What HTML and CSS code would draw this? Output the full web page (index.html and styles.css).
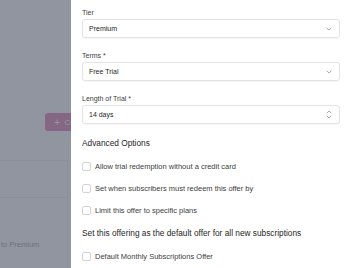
FILE: index.html
```html
<!DOCTYPE html>
<html lang="en">
<head>
<meta charset="utf-8">
<title>Offer</title>
<link rel="stylesheet" href="styles.css">
</head>
<body>
<div class="page">
  <div class="toolbar">
    <button class="create-btn"><span class="plus">+</span> Create</button>
  </div>
  <div class="table">
    <div class="row"></div>
    <div class="row row-tall"><span class="cell-text">to Premium</span></div>
  </div>
</div>
<div class="overlay"></div>
<aside class="panel">
  <div class="field">
    <label class="label">Tier</label>
    <div class="select"><span>Premium</span>
      <svg class="chev" viewBox="0 0 6 4" width="6" height="4"><path d="M0.6 0.7 L3 3.1 L5.4 0.7" fill="none" stroke="#a3a3a3" stroke-width="0.9"/></svg>
    </div>
  </div>
  <div class="field">
    <label class="label">Terms *</label>
    <div class="select"><span>Free Trial</span>
      <svg class="chev" viewBox="0 0 6 4" width="6" height="4"><path d="M0.6 0.7 L3 3.1 L5.4 0.7" fill="none" stroke="#a3a3a3" stroke-width="0.9"/></svg>
    </div>
  </div>
  <div class="field">
    <label class="label">Length of Trial *</label>
    <div class="select"><span>14 days</span>
      <svg class="chev" viewBox="0 0 6 9" width="6" height="9"><path d="M0.8 3.2 L3 1 L5.2 3.2 M0.8 5.8 L3 8 L5.2 5.8" fill="none" stroke="#a3a3a3" stroke-width="0.9"/></svg>
    </div>
  </div>
  <h3 class="heading">Advanced Options</h3>
  <div class="checks">
    <label class="check"><span class="box"></span>Allow trial redemption without a credit card</label>
    <label class="check"><span class="box"></span>Set when subscribers must redeem this offer by</label>
    <label class="check"><span class="box"></span>Limit this offer to specific plans</label>
  </div>
  <h3 class="heading heading-2">Set this offering as the default offer for all new subscriptions</h3>
  <div class="checks checks-2">
    <label class="check"><span class="box"></span>Default Monthly Subscriptions Offer</label>
  </div>
</aside>
</body>
</html>
```

FILE: styles.css
```css
* { box-sizing: border-box; }
html, body {
  margin: 0;
  padding: 0;
  width: 348px;
  height: 268px;
  overflow: hidden;
  background: #ffffff;
  font-family: "Liberation Sans", Arial, sans-serif;
}
.page {
  display: flex;
  flex-direction: column;
  padding-top: 113px;
  width: 348px;
  height: 268px;
  overflow: hidden;
}
.toolbar {
  display: flex;
  padding-left: 45px;
}
.create-btn {
  height: 18px;
  width: 60px;
  border: none;
  border-radius: 3px;
  background: #d64593;
  color: #ffffff;
  font-family: inherit;
  font-size: 8px;
  text-align: left;
  padding: 0 0 0 9px;
  display: flex;
  align-items: center;
  gap: 4px;
}
.plus { font-size: 11px; line-height: 1; }
.table {
  margin-top: 29px;
  width: 68px;
  border-right: 1px solid #e5e7eb;
  display: flex;
  flex-direction: column;
  flex: 1;
}
.row {
  height: 37px;
  border-top: 1px solid #e5e7eb;
}
.row-tall {
  flex: 1;
  padding-top: 35px;
  padding-left: 1px;
  border-top: 1px solid #e5e7eb;
}
.cell-text {
  white-space: nowrap;
  font-size: 7.5px;
  line-height: 10px;
  color: #6b7280;
}
.overlay {
  position: fixed;
  inset: 0;
  background: rgba(107, 114, 128, 0.75);
}
.panel {
  position: fixed;
  top: 0;
  bottom: 0;
  left: 71px;
  right: 0;
  background: #ffffff;
  padding: 8px 8px 0 11px;
  display: flex;
  flex-direction: column;
  overflow: hidden;
}
.field {
  display: flex;
  flex-direction: column;
  gap: 1px;
  margin-bottom: 13px;
}
.label {
  font-size: 7px;
  line-height: 10px;
  color: #404040;
}
.select {
  height: 19px;
  border: 1px solid #e3e3e6;
  border-radius: 3px;
  box-shadow: 0 0.5px 1px rgba(0,0,0,0.04);
  display: flex;
  align-items: center;
  justify-content: space-between;
  padding: 0 7px 0 6px;
  font-size: 7px;
  color: #262626;
}
.chev { display: block; }
.heading {
  margin: 0;
  font-weight: normal;
  font-size: 8.3px;
  line-height: 12px;
  color: #262626;
}
.heading-2 { margin-top: 10.5px; }
.checks {
  display: flex;
  flex-direction: column;
  gap: 10px;
  margin-top: 11px;
}
.checks-2 { margin-top: 11.5px; }
.check {
  display: flex;
  align-items: center;
  gap: 4px;
  height: 12px;
  font-size: 7.5px;
  color: #404040;
}
.box {
  width: 9px;
  height: 9px;
  border: 1px solid #d4d4d8;
  border-radius: 2px;
  background: #ffffff;
  flex: none;
}
```
